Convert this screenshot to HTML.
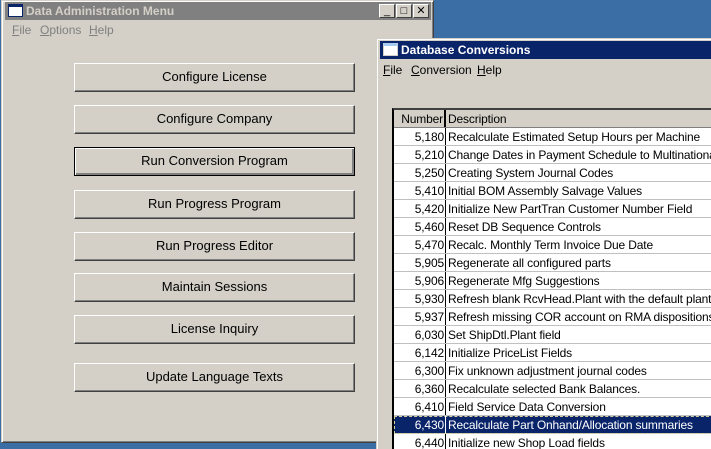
<!DOCTYPE html>
<html><head><meta charset="utf-8"><style>
*{margin:0;padding:0;box-sizing:border-box}
html{width:711px;height:449px;overflow:hidden}
body{width:711px;height:449px;overflow:hidden;background:#3a6ea5;position:relative;font-family:"Liberation Sans",Tahoma,sans-serif;font-size:11px}
.win{position:absolute;background:#d4d0c8;border:1px solid;border-color:#d4d0c8 #404040 #404040 #d4d0c8;box-shadow:inset 1px 1px 0 #fff,inset -1px -1px 0 #808080;overflow:hidden}
.title{position:absolute;height:18px;font-weight:bold;font-size:12px;color:#d4d0c8;line-height:18px;padding-left:21px}
.ico{position:absolute;left:3px;top:2px;width:15px;height:13px;background:#fff}
.cb{position:absolute;top:2px;width:16px;height:14px;background:#d4d0c8;border:1px solid;border-color:#fff #404040 #404040 #fff;font-size:11px;color:#000;text-align:center;line-height:12px}
.menu{position:absolute;font-size:12px;color:#808080;white-space:nowrap}
.menu u{text-decoration-thickness:1px}
.btn{position:absolute;left:74px;width:281px;height:29px;background:#d4d0c8;border:1px solid;border-color:#fff #404040 #404040 #fff;box-shadow:inset -1px -1px 0 #808080;text-align:center;line-height:26px;font-size:13px;color:#000}
.btn.f{border:1px solid #000;box-shadow:inset 1px 1px 0 #fff,inset -2px -2px 0 #808080}
.grid{position:absolute;left:392px;top:108px;width:330px;height:350px;background:#fff;border:2px solid;border-color:#404040 #404040 #404040 #000;overflow:hidden}
.row{position:absolute;left:0;width:330px;height:18px;border-bottom:1px solid #c0c0c0;font-size:12px;line-height:18px;color:#000;letter-spacing:-0.15px}
.n{position:absolute;left:0;width:52px;text-align:right;padding-right:1px;height:17px;border-right:1px solid #000}
.d{position:absolute;left:54px;white-space:nowrap}
.hdr{background:#d4d0c8;border-bottom:1px solid #808080}
.sel{background:#0a246a;color:#fff;outline:1px dashed #d4d0a0;outline-offset:-1px}
</style></head><body>
<div class="win" style="left:1px;top:0;width:433px;height:443px">
 <div class="title" style="left:3px;top:1px;width:426px;background:#808080"><div class="ico" style="border:1px solid #0a246a;border-top:3px solid #0a246a"></div>Data Administration Menu</div>
 <div class="cb" style="left:377px;top:3px">_</div>
 <div class="cb" style="left:394px;top:3px">□</div>
 <div class="cb" style="left:411px;top:3px">✕</div>
 <div class="menu" style="left:10px;top:22px"><span style="position:absolute;left:0"><u>F</u>ile</span><span style="position:absolute;left:28px"><u>O</u>ptions</span><span style="position:absolute;left:77px"><u>H</u>elp</span></div>
</div>
<div class="btn" style="top:63px">Configure License</div>
<div class="btn" style="top:105px">Configure Company</div>
<div class="btn f" style="top:147px">Run Conversion Program</div>
<div class="btn" style="top:190px">Run Progress Program</div>
<div class="btn" style="top:232px">Run Progress Editor</div>
<div class="btn" style="top:273px">Maintain Sessions</div>
<div class="btn" style="top:315px">License Inquiry</div>
<div class="btn" style="top:363px">Update Language Texts</div>

<div class="win" style="left:376px;top:38px;width:340px;height:415px">
 <div class="title" style="left:3px;top:2px;width:340px;background:#0a246a;color:#fff;font-size:12px"><div class="ico" style="border:1px solid #d4d0c8;border-top:3px solid #a6caf0"></div>Database Conversions</div>
 <div class="menu" style="left:6px;top:24px;color:#000"><span style="position:absolute;left:0"><u>F</u>ile</span><span style="position:absolute;left:28px"><u>C</u>onversion</span><span style="position:absolute;left:94px"><u>H</u>elp</span></div>
</div>
<div class="grid">
 <div class="row hdr" style="top:0"><div class="n" style="border-right:2px solid #000">Number</div><div class="d">Description</div></div>
 <div class="row" style="top:18px"><div class="n">5,180</div><div class="d">Recalculate Estimated Setup Hours per Machine</div></div>
 <div class="row" style="top:36px"><div class="n">5,210</div><div class="d">Change Dates in Payment Schedule to Multinational Format</div></div>
 <div class="row" style="top:54px"><div class="n">5,250</div><div class="d">Creating System Journal Codes</div></div>
 <div class="row" style="top:72px"><div class="n">5,410</div><div class="d">Initial BOM Assembly Salvage Values</div></div>
 <div class="row" style="top:90px"><div class="n">5,420</div><div class="d">Initialize New PartTran Customer Number Field</div></div>
 <div class="row" style="top:108px"><div class="n">5,460</div><div class="d">Reset DB Sequence Controls</div></div>
 <div class="row" style="top:126px"><div class="n">5,470</div><div class="d">Recalc. Monthly Term Invoice Due Date</div></div>
 <div class="row" style="top:144px"><div class="n">5,905</div><div class="d">Regenerate all configured parts</div></div>
 <div class="row" style="top:162px"><div class="n">5,906</div><div class="d">Regenerate Mfg Suggestions</div></div>
 <div class="row" style="top:180px"><div class="n">5,930</div><div class="d">Refresh blank RcvHead.Plant with the default plant</div></div>
 <div class="row" style="top:198px"><div class="n">5,937</div><div class="d">Refresh missing COR account on RMA dispositions.</div></div>
 <div class="row" style="top:216px"><div class="n">6,030</div><div class="d">Set ShipDtl.Plant field</div></div>
 <div class="row" style="top:234px"><div class="n">6,142</div><div class="d">Initialize PriceList Fields</div></div>
 <div class="row" style="top:252px"><div class="n">6,300</div><div class="d">Fix unknown adjustment journal codes</div></div>
 <div class="row" style="top:270px"><div class="n">6,360</div><div class="d">Recalculate selected Bank Balances.</div></div>
 <div class="row" style="top:288px"><div class="n">6,410</div><div class="d">Field Service Data Conversion</div></div>
 <div class="row sel" style="top:306px"><div class="n" style="border-right-color:#fff">6,430</div><div class="d">Recalculate Part Onhand/Allocation summaries</div></div>
 <div class="row" style="top:324px"><div class="n">6,440</div><div class="d">Initialize new Shop Load fields</div></div>
</div>
</body></html>
